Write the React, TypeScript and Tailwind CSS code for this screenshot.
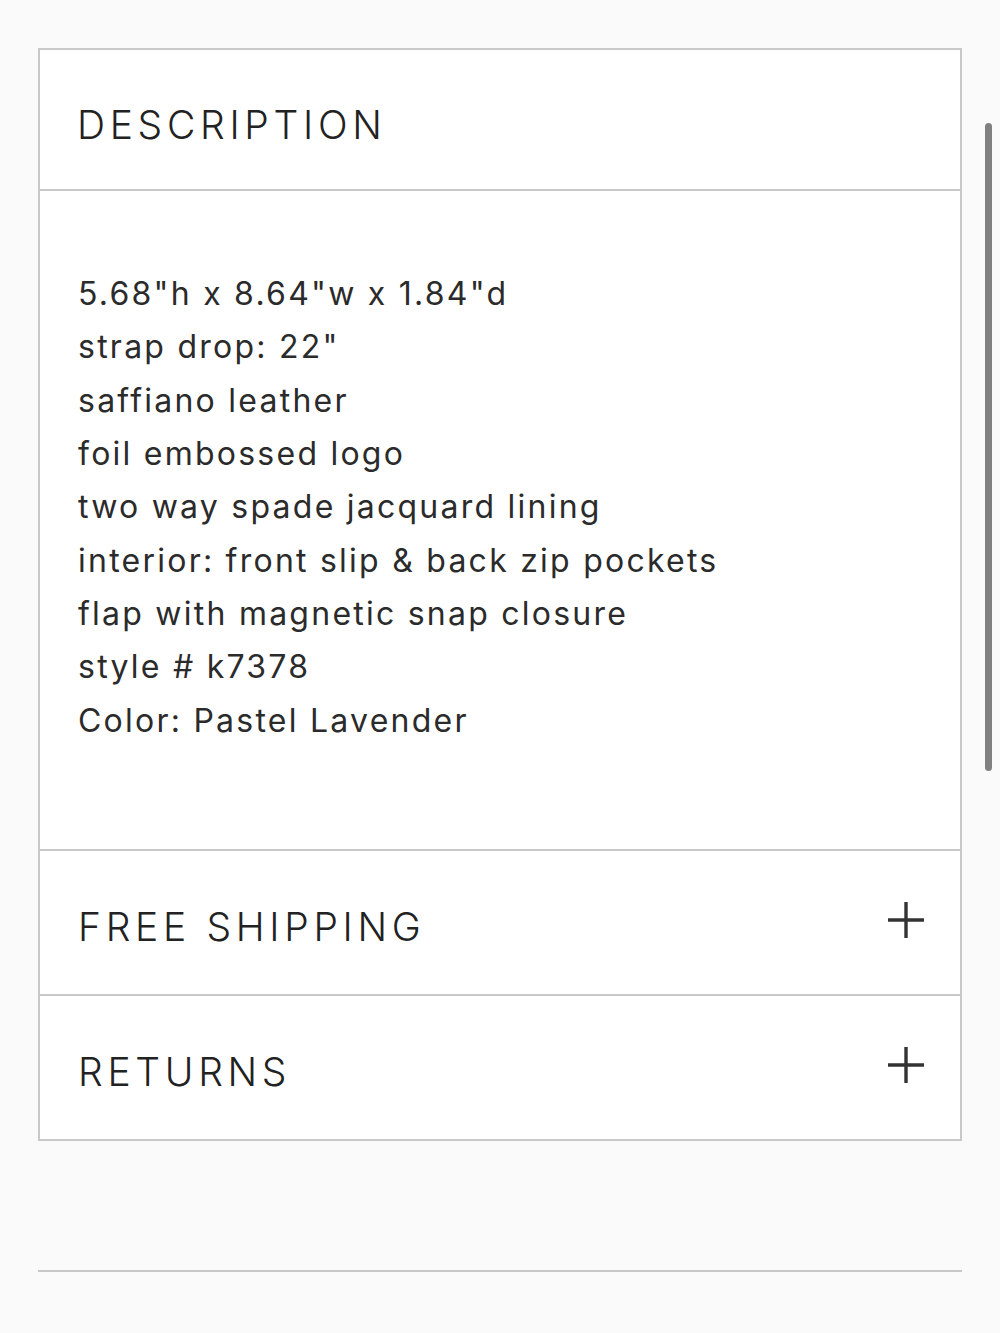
const lines = [
  '5.68"h x 8.64"w x 1.84"d',
  'strap drop: 22"',
  'saffiano leather',
  'foil embossed logo',
  'two way spade jacquard lining',
  'interior: front slip & back zip pockets',
  'flap with magnetic snap closure',
  'style # k7378',
  'Color: Pastel Lavender',
];

function PlusIcon() {
  return (
    <svg viewBox="0 0 36 36" className="-mt-[4px] h-[36px] w-[36px] shrink-0" aria-hidden="true">
      <path d="M18 0v36M0 18h36" stroke="#333" strokeWidth={3.4} fill="none" />
    </svg>
  );
}

function CollapsedRow({ title }: { title: string }) {
  return (
    <div className="flex h-[143px] items-start justify-between pl-[38px] pr-[36px] pt-[55px]">
      <span className="text-[39px] font-light leading-[41px] tracking-[0.12em] text-[#222]">{title}</span>
      <PlusIcon />
    </div>
  );
}

export default function App() {
  return (
    <div
      className="relative min-h-[1333px] bg-[#fafafa] px-[38px] pt-[48px]"
      style={{ fontFamily: 'Inter, "Noto Sans", sans-serif' }}
    >
      <div className="border-2 border-[#c8c8c8] bg-white">
        <div className="h-[141px] border-b-2 border-[#c8c8c8] pl-[37px] pt-[54px]">
          <h2 className="text-[39px] font-light leading-[41px] tracking-[0.12em] text-[#222]">DESCRIPTION</h2>
        </div>
        <div className="h-[660px] border-b-2 border-[#c8c8c8] pl-[38px] pt-[76px]">
          {lines.map((line) => (
            <p key={line} className="text-[32px] leading-[53.33px] tracking-[0.07em] text-[#2b2b2b]">
              {line}
            </p>
          ))}
        </div>
        <div className="border-b-2 border-[#c8c8c8]">
          <CollapsedRow title="FREE SHIPPING" />
        </div>
        <CollapsedRow title="RETURNS" />
      </div>
      <div className="mt-[129px] h-[2px] bg-[#c8c8c8]" />
      {/* scrollbar thumb */}
      <div className="absolute left-[985px] top-[123px] h-[648px] w-[7px] rounded-full bg-[#808080]" />
    </div>
  );
}
